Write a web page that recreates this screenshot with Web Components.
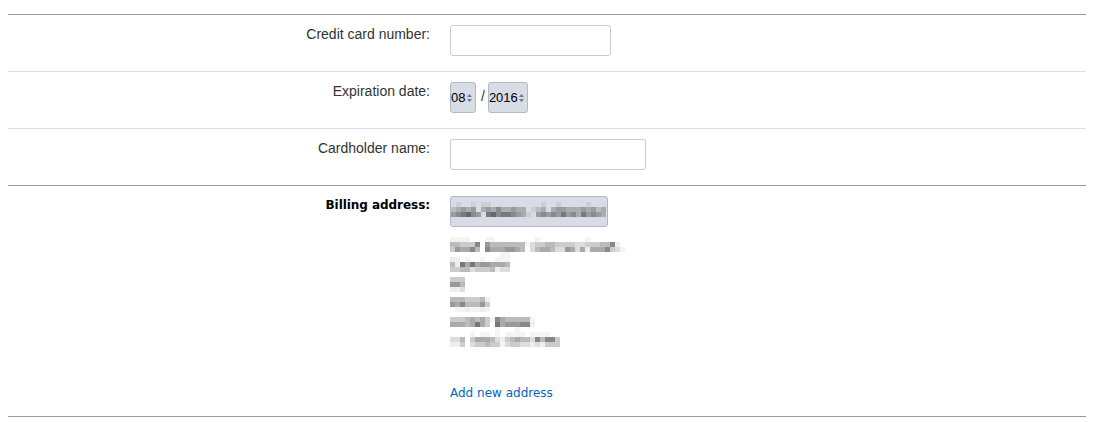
<!DOCTYPE html>
<html lang="en">
<head>
<meta charset="utf-8">
<title>Payment</title>
<style>
  html, body { background: #fff; }
  body { margin: 14px 12px 0 8px; font-family: "Liberation Sans", Arial, sans-serif; }
</style>
</head>
<body>
<checkout-form>
  <form-row label="Credit card number:">
    <text-field width="161"></text-field>
  </form-row>
  <form-row label="Expiration date:">
    <date-select>
      <select-box value="08" width="26"></select-box>
      <span>/</span>
      <select-box value="2016" width="40"></select-box>
    </date-select>
  </form-row>
  <form-row label="Cardholder name:">
    <text-field width="196"></text-field>
  </form-row>
  <form-row label="Billing address:" strong>
    <address-block></address-block>
  </form-row>
</checkout-form>

<script>
// Grey levels for the redacted areas: one hex digit per 5px block, '.' is empty
const ADDRESS_MOSAIC = [
  'ffff...ff........f.........f',
  'bbccc8.9bbbbbbbfdccbbccccddcccbb8e',
  'c9aa8b.8aaa99ab.dbaabdd9adaeaaa8cdf',
  '..........ff',
  'ee.f..f..fff',
  'be7a7a99aaab',
  'ccbbdcccbedd',
  '',
  'ccc',
  '99b',
  'eed',
  '',
  'bbbcccbe',
  '9a8bbb9c',
  '.ffeffef',
  '',
  'cccbabacf8abbbbbf',
  'aaaba7ac.7a99988e',
  '.........f...f',
  '....f.ff.f.ffff.ffff',
  'ddb.caaabdecbabbd8b88c',
  'eec.dccbccfdccddedeccc'
];

const BUTTON_MOSAIC = [
  '.c..c.cc..........c..c.....c',
  'ba9a9.a9a8aa9aa.cba.a99aaa9a9ba',
  '987689.7687789ac.98989798a7989a'
];

const greyOf = (digit, tinted) => {
  const v = digit === 'f' ? 0xf4 : parseInt(digit, 16) * 17;
  return tinted ? `rgb(${v},${v + 2},${Math.min(255, v + 8)})` : `rgb(${v},${v},${v})`;
};

const mosaicSvg = (rows, tinted) => {
  const cols = Math.max(...rows.map(r => r.length));
  let rects = '';
  rows.forEach((row, y) => {
    [...row].forEach((digit, x) => {
      if (digit === '.') return;
      rects += `<rect x="${x * 5}" y="${y * 5}" width="5" height="5" fill="${greyOf(digit, tinted)}"/>`;
    });
  });
  const w = cols * 5, h = rows.length * 5;
  return `<svg width="${w}" height="${h}" viewBox="0 0 ${w} ${h}" shape-rendering="crispEdges" style="display:block">${rects}</svg>`;
};

class CheckoutForm extends HTMLElement {
  constructor() {
    super();
    this.attachShadow({ mode: 'open' });
    this.shadowRoot.innerHTML = `
      <style>
        :host { display: block; border-bottom: 1px solid #999; }
      </style>
      <slot></slot>
    `;
  }
}

class FormRow extends HTMLElement {
  constructor() {
    super();
    this.attachShadow({ mode: 'open' });
    const strong = this.hasAttribute('strong');
    this.shadowRoot.innerHTML = `
      <style>
        :host {
          display: grid;
          grid-template-columns: 422px 1fr;
          column-gap: 20px;
          padding: 10px 0 15px;
          border-top: 1px solid #ddd;
        }
        :host([strong]), :host(:first-child) { border-top-color: #999; }
        :host([strong]) { padding-bottom: 15px; }
        .label {
          text-align: right;
          font-size: 14px;
          line-height: 18px;
          color: #333;
        }
        .label.strong {
          font-family: "DejaVu Sans", Verdana, sans-serif;
          font-weight: bold;
          font-size: 12px;
          line-height: 19px;
          letter-spacing: -0.05px;
          color: #000;
        }
      </style>
      <div class="label ${strong ? 'strong' : ''}">${this.getAttribute('label')}</div>
      <div class="value"><slot></slot></div>
    `;
  }
}

class TextField extends HTMLElement {
  constructor() {
    super();
    this.attachShadow({ mode: 'open' });
    this.shadowRoot.innerHTML = `
      <style>
        :host {
          display: block;
          box-sizing: border-box;
          width: ${this.getAttribute('width')}px;
          height: 31px;
          background: #fff;
          border: 1px solid #ccc;
          border-radius: 3px;
        }
      </style>
    `;
  }
}

class DateSelect extends HTMLElement {
  constructor() {
    super();
    this.attachShadow({ mode: 'open' });
    this.shadowRoot.innerHTML = `
      <style>
        :host {
          display: flex;
          align-items: flex-start;
          gap: 5px;
          font-size: 14px;
          line-height: 18px;
          color: #333;
        }
        ::slotted(span) { margin: 5px -2px 0 0; }
      </style>
      <slot></slot>
    `;
  }
}

class SelectBox extends HTMLElement {
  constructor() {
    super();
    this.attachShadow({ mode: 'open' });
    this.shadowRoot.innerHTML = `
      <style>
        :host {
          display: flex;
          align-items: center;
          justify-content: space-between;
          box-sizing: border-box;
          width: ${this.getAttribute('width')}px;
          height: 31px;
          padding: 0 3px 0 0;
          background: #d7dce5;
          border: 1px solid #b4b8c0;
          border-radius: 3px;
          font-size: 13px;
          color: #000;
        }
        svg { display: block; flex: none; }
      </style>
      <span>${this.getAttribute('value')}</span>
      <svg width="5" height="8" viewBox="0 0 5 8"><path d="M2.5 0 5 3H0zM2.5 8 0 5h5z" fill="#777"/></svg>
    `;
  }
}

class AddressBlock extends HTMLElement {
  constructor() {
    super();
    this.attachShadow({ mode: 'open' });
    this.shadowRoot.innerHTML = `
      <style>
        :host { display: block; }
        .picker {
          box-sizing: border-box;
          width: 158px;
          height: 31px;
          padding-top: 5px;
          background: #d7dce6;
          border: 1px solid #b4b8c2;
          border-radius: 3px;
        }
        .lines { margin: 10px 0 0; }
        a {
          display: block;
          margin-top: 38px;
          font-family: "DejaVu Sans", Verdana, sans-serif;
          font-size: 12px;
          line-height: 16px;
          color: #0066c0;
          text-decoration: none;
        }
      </style>
      <div class="picker">${mosaicSvg(BUTTON_MOSAIC, true)}</div>
      <div class="lines">${mosaicSvg(ADDRESS_MOSAIC, false)}</div>
      <a href="#">Add new address</a>
    `;
  }
}

customElements.define('checkout-form', CheckoutForm);
customElements.define('form-row', FormRow);
customElements.define('text-field', TextField);
customElements.define('date-select', DateSelect);
customElements.define('select-box', SelectBox);
customElements.define('address-block', AddressBlock);
</script>
</body>
</html>
